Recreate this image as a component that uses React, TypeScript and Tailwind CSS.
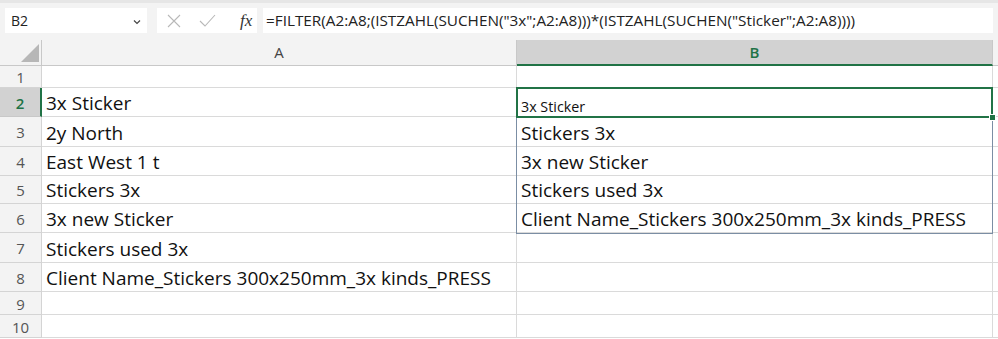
import React from 'react'

const colA = [
  '',
  '3x Sticker',
  '2y North',
  'East West 1 t',
  'Stickers 3x',
  '3x new Sticker',
  'Stickers used 3x',
  'Client Name_Stickers 300x250mm_3x kinds_PRESS',
  '',
  '',
]

const colB = [
  '',
  '3x Sticker',
  'Stickers 3x',
  '3x new Sticker',
  'Stickers used 3x',
  'Client Name_Stickers 300x250mm_3x kinds_PRESS',
  '',
  '',
  '',
  '',
]

const rowHeights = ['h-[22px]', 'h-[29px]', 'h-[30px]', 'h-[29px]', 'h-[28px]', 'h-[29px]', 'h-[30px]', 'h-[29px]', 'h-[23px]', 'h-[23px]']

const formula = '=FILTER(A2:A8;(ISTZAHL(SUCHEN("3x";A2:A8)))*(ISTZAHL(SUCHEN("Sticker";A2:A8))))'

function FormulaBar() {
  return (
    <div className="flex h-[40px] items-start gap-[10px] border-t-[3px] border-[#e6e6e6] bg-[#f3f3f3] px-[5px] pt-[5px]">
      <div className="flex h-[25px] w-[142px] items-center justify-between bg-white pl-[6px] pr-[6px] text-[14px] text-[#222]">
        <span>B2</span>
        <svg width="8" height="6" viewBox="0 0 8 6" className="mt-[2px]">
          <path d="M1 1.5 L4 4.5 L7 1.5" fill="none" stroke="#444" strokeWidth="1.2" />
        </svg>
      </div>
      <div className="flex h-[25px] w-[100px] items-center gap-[18px] bg-white pl-[10px]">
        <svg width="14" height="14" viewBox="0 0 14 14">
          <path d="M1 1 L13 13 M13 1 L1 13" stroke="#b8b8b8" strokeWidth="1.1" fill="none" />
        </svg>
        <svg width="17" height="13" viewBox="0 0 17 13">
          <path d="M1 7 L6 12 L16 1" stroke="#b8b8b8" strokeWidth="1.1" fill="none" />
        </svg>
        <span className="ml-[6px] font-['Liberation_Serif',serif] text-[17px] italic text-[#333]">fx</span>
      </div>
      <div className="-ml-[4px] flex h-[25px] flex-1 items-center bg-white pl-[3px] text-[15.3px] text-[#222]">
        {formula}
      </div>
    </div>
  )
}

function Corner() {
  return (
    <svg width="18" height="18" viewBox="0 0 18 18">
      <polygon points="18,0 18,18 0,18" fill="#b7b7b7" />
    </svg>
  )
}

export default function App() {
  return (
    <div className="h-[339px] w-[998px] overflow-hidden bg-white font-['Open_Sans',sans-serif]">
      <FormulaBar />
      <div className="relative">
        {/* column headers */}
        <div className="flex h-[26px] bg-[#f3f3f3] text-[15px] text-[#444]">
          <div className="flex w-[42px] items-end justify-end border-b border-r border-[#c8c8c8] pb-[3px] pr-[2px]">
            <Corner />
          </div>
          <div className="flex w-[475px] items-center justify-center border-b border-r border-[#c8c8c8]">A</div>
          <div className="flex w-[476px] items-center justify-center border-b-2 border-r border-b-[#217346] border-r-[#c8c8c8] bg-[#d2d2d2] font-semibold text-[#217346]">
            B
          </div>
          <div className="flex-1 border-b border-[#c8c8c8]" />
        </div>
        {/* rows */}
        {colA.map((a, i) => {
          const active = i === 1
          return (
            <div key={i} className={`flex ${rowHeights[i]}`}>
              <div
                className={
                  active
                    ? 'flex w-[42px] items-center justify-center border-b border-r-2 border-b-[#c8c8c8] border-r-[#217346] bg-[#d2d2d2] pt-[2px] text-[15px] font-semibold text-[#217346]'
                    : 'flex w-[42px] items-center justify-center border-b border-r border-[#d4d4d4] bg-[#f3f3f3] pt-[2px] text-[15px] text-[#555]'
                }
              >
                {i + 1}
              </div>
              <div className="flex w-[475px] items-end border-b border-r border-[#dadada] pl-[4px] text-[19px] leading-[26px] text-[#111]">
                {a}
              </div>
              <div
                className={
                  active
                    ? 'flex w-[476px] items-end border-b border-r border-[#dadada] pl-[4px] text-[14.3px] leading-[19px] text-[#111]'
                    : 'flex w-[476px] items-end border-b border-r border-[#dadada] pl-[4px] text-[19px] leading-[26px] text-[#111]'
                }
              >
                {colB[i]}
              </div>
              <div className="flex-1 border-b border-[#dadada]" />
            </div>
          )
        })}
        {/* spill range outline B2:B6 */}
        <div className="pointer-events-none absolute left-[516px] top-[48px] h-[146px] w-[477px] border border-[#7b8ea4]" />
        {/* active cell B2 */}
        <div className="pointer-events-none absolute left-[516px] top-[47px] h-[31px] w-[477px] border-2 border-[#217346]" />
        <div className="pointer-events-none absolute left-[989px] top-[74px] h-[7px] w-[7px] border border-white bg-[#217346]" />
      </div>
    </div>
  )
}
